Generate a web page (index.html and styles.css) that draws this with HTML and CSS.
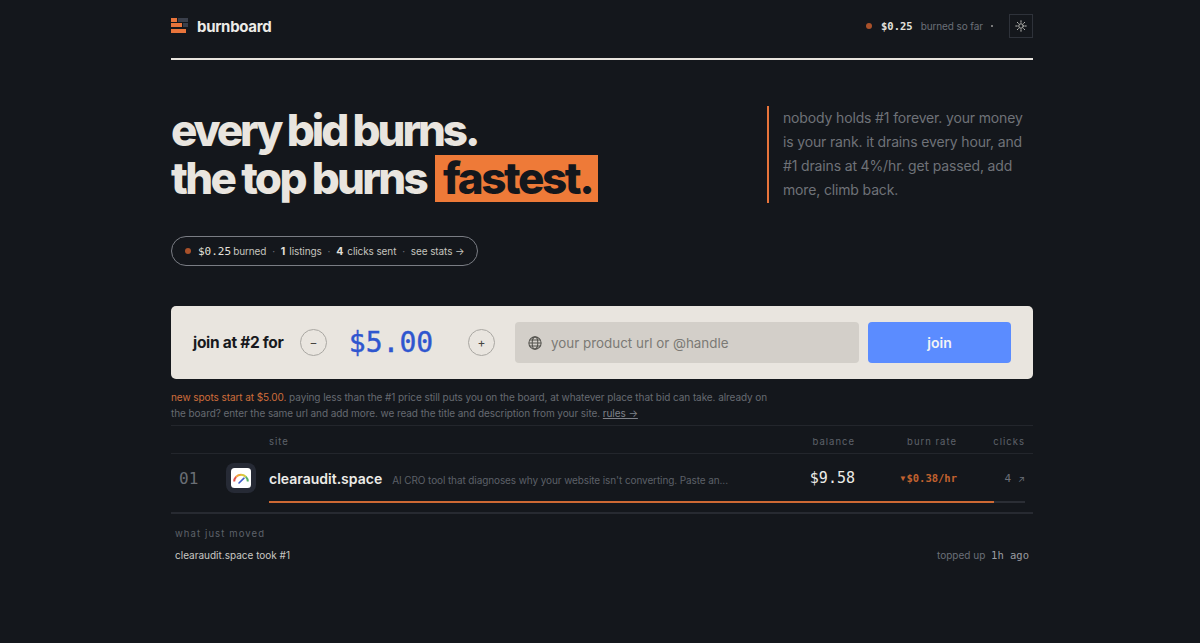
FILE: index.html
```html
<!DOCTYPE html>
<html lang="en">
<head>
    <meta charset="UTF-8">
    <meta name="viewport" content="width=device-width, initial-scale=1.0">
    <title>burnboard</title>
    <link rel="stylesheet" href="styles.css">
</head>
<body>
    <div class="container">
        <header class="topbar">
            <div class="brand">
                <svg class="brand-icon" width="17" height="16" viewBox="0 0 17 16">
                    <rect x="0" y="0" width="6" height="4" fill="#e8743b"/>
                    <rect x="7" y="0" width="10" height="4" fill="#3a3f4b"/>
                    <rect x="0" y="5" width="11" height="4" fill="#e8743b"/>
                    <rect x="12" y="5" width="5" height="4" fill="#3a3f4b"/>
                    <rect x="0" y="11" width="15" height="4" fill="#e8743b"/>
                </svg>
                <span class="brand-name">burnboard</span>
            </div>
            <div class="top-stats">
                <span class="dot"></span>
                <span class="mono top-amount">$0.25</span>
                <span class="top-label">burned so far</span>
                <span class="tiny-dot"></span>
                <button class="theme-btn" aria-label="theme">
                    <svg width="12" height="12" viewBox="0 0 24 24" fill="none" stroke="#b9b9b4" stroke-width="2" stroke-linecap="round">
                        <circle cx="12" cy="12" r="4.5"/>
                        <path d="M12 1.5v3M12 19.5v3M1.5 12h3M19.5 12h3M4.6 4.6l2.1 2.1M17.3 17.3l2.1 2.1M4.6 19.4l2.1-2.1M17.3 6.7l2.1-2.1"/>
                    </svg>
                </button>
            </div>
        </header>

        <section class="hero">
            <h1><span class="tight">every bid burns.</span><br>the top burns <span class="hl">fastest.</span></h1>
            <p class="hero-note">nobody holds #1 forever. your money is your rank. it drains every hour, and #1 drains at 4%/hr. get passed, add more, climb back.</p>
        </section>

        <div class="pill">
            <span class="dot"></span>
            <span class="mono pill-amount">$0.25</span>
            <span class="pill-text">burned</span>
            <span class="sep">·</span>
            <strong>1</strong>
            <span class="pill-text">listings</span>
            <span class="sep">·</span>
            <strong>4</strong>
            <span class="pill-text">clicks sent</span>
            <span class="sep">·</span>
            <span class="pill-text">see stats →</span>
        </div>

        <form class="join">
            <span class="join-label">join at #2 for</span>
            <button type="button" class="round-btn">−</button>
            <span class="mono price">$5.00</span>
            <button type="button" class="round-btn">+</button>
            <div class="url-field">
                <svg width="14" height="14" viewBox="0 0 24 24" fill="none" stroke="#55544f" stroke-width="1.8">
                    <circle cx="12" cy="12" r="10.5"/>
                    <ellipse cx="12" cy="12" rx="4.8" ry="10.5"/>
                    <path d="M1.5 12h21M3 6.8h18M3 17.2h18"/>
                </svg>
                <span>your product url or @handle</span>
            </div>
            <button type="button" class="join-btn">join</button>
        </form>

        <p class="fine"><span class="accent">new spots start at $5.00.</span> paying less than the #1 price still puts you on the board, at whatever place that bid can take. already on the board? enter the same url and add more. we read the title and description from your site. <a href="#">rules →</a></p>

        <div class="board">
            <div class="row head">
                <span></span>
                <span></span>
                <span class="col-site">site</span>
                <span class="num">balance</span>
                <span class="num">burn rate</span>
                <span class="num">clicks</span>
            </div>
            <div class="listing">
                <div class="row item">
                    <span class="mono rank">01</span>
                    <span class="favicon">
                        <svg width="20" height="20" viewBox="0 0 20 20" fill="none" stroke-width="2">
                            <rect width="20" height="20" rx="3.5" fill="#fff"/>
                            <path d="M3.2 13.5a6.8 6.8 0 0 1 2-4.8" stroke="#e2574c"/>
                            <path d="M5.2 8.7a6.8 6.8 0 0 1 4.8-2" stroke="#f0a63c"/>
                            <path d="M10 6.7a6.8 6.8 0 0 1 4.8 2" stroke="#d9c93f"/>
                            <path d="M14.8 8.7a6.8 6.8 0 0 1 2 4.8" stroke="#58b368"/>
                            <path d="M8 15l5-4.8" stroke="#3f5bc9" stroke-width="1.6" stroke-linecap="round"/>
                        </svg>
                    </span>
                    <span class="site"><b>clearaudit.space</b><em>AI CRO tool that diagnoses why your website isn't converting. Paste an...</em></span>
                    <span class="mono num balance">$9.58</span>
                    <span class="mono num rate"><i>▾</i>$0.38/hr</span>
                    <span class="num clicks"><span class="mono">4</span><small>↗</small></span>
                </div>
                <div class="bar"><div class="bar-fill" style="width: 95.9%"></div></div>
            </div>
        </div>

        <section class="moves">
            <div class="moves-title">what just moved</div>
            <div class="move">
                <span>clearaudit.space took #1</span>
                <span class="move-when">topped up <span class="mono">1h ago</span></span>
            </div>
        </section>
    </div>
</body>
</html>
```

FILE: styles.css
```css
* {
    margin: 0;
    padding: 0;
    box-sizing: border-box;
}

body {
    font-family: 'Inter', sans-serif;
    background: #14171c;
    color: #e8e4de;
    height: 643px;
    overflow: hidden;
}

.container {
    width: 862px;
    margin-left: 171px;
}

.mono {
    font-family: 'DejaVu Sans Mono', monospace;
}

.dot {
    width: 6px;
    height: 6px;
    border-radius: 50%;
    background: #a9512a;
    flex: none;
}

/* Top bar */
.topbar {
    height: 60px;
    border-bottom: 2px solid #e8e4de;
    display: flex;
    align-items: center;
    justify-content: space-between;
    padding-bottom: 6px;
}

.brand {
    display: flex;
    align-items: center;
    gap: 9px;
}

.brand-name {
    font-size: 15px;
    font-weight: 700;
    letter-spacing: -0.3px;
    color: #ecebe7;
}

.top-stats {
    display: flex;
    align-items: center;
    font-size: 10px;
}

.top-amount {
    margin-left: 9px;
    font-size: 10.5px;
    font-weight: 700;
    color: #e3e1dc;
}

.top-label {
    margin-left: 8px;
    letter-spacing: -0.1px;
    color: #6b6f78;
}

.tiny-dot {
    width: 2px;
    height: 2px;
    margin: 0 16px 0 8px;
    background: #9a9a98;
    border-radius: 50%;
}

.theme-btn {
    width: 24px;
    height: 24px;
    background: transparent;
    border: 1px solid #2e323a;
    display: flex;
    align-items: center;
    justify-content: center;
}

/* Hero */
.hero {
    display: flex;
    justify-content: space-between;
    padding-top: 46px;
}

h1 {
    font-size: 44px;
    line-height: 48px;
    font-weight: 800;
    letter-spacing: -2.7px;
    color: #e9e5df;
}

.tight {
    letter-spacing: -3.1px;
}

.hl {
    display: inline-block;
    background: #ee7a38;
    color: #14171c;
    padding: 0 6px 0 8px;
    margin-left: 2px;
    height: 47px;
    line-height: 47px;
    letter-spacing: -2.4px;
}

.hero-note {
    width: 266px;
    height: 97px;
    border-left: 2px solid #e8743b;
    padding-left: 14px;
    font-size: 14px;
    line-height: 24px;
    letter-spacing: -0.15px;
    color: #6f7278;
}

/* Stats pill */
.pill {
    display: inline-flex;
    align-items: center;
    height: 30px;
    margin-top: 33px;
    padding: 0 12px 0 13px;
    border: 1px solid #7a7d84;
    border-radius: 15px;
    font-size: 10px;
    color: #c5c4bf;
}

.pill-text {
    letter-spacing: -0.1px;
}

.pill-amount {
    margin-left: 7px;
    margin-right: 2px;
    font-size: 11px;
    color: #e2e0db;
}

.pill strong {
    margin-right: 4px;
    font-size: 10.5px;
    font-weight: 700;
    color: #e2e0db;
}

.sep {
    margin: 0 5.8px;
    color: #6b6f78;
}

/* Join form */
.join {
    display: flex;
    align-items: center;
    height: 73px;
    margin-top: 40px;
    padding: 0 22px;
    background: #e9e5df;
    border-radius: 5px;
}

.join-label {
    width: 92px;
    font-size: 15.5px;
    font-weight: 700;
    letter-spacing: -0.3px;
    color: #17191d;
    white-space: nowrap;
}

.round-btn {
    width: 27px;
    height: 27px;
    flex: none;
    background: transparent;
    border: 1px solid #a9a7a2;
    border-radius: 50%;
    color: #45443f;
    font-family: 'Inter', sans-serif;
    font-size: 12px;
}

.join-label + .round-btn {
    margin-left: 15px;
}

.price {
    width: 141px;
    padding-right: 13px;
    text-align: center;
    font-size: 28px;
    color: #2f56cf;
    -webkit-text-stroke: 0.4px #2f56cf;
}

.url-field {
    display: flex;
    align-items: center;
    gap: 9px;
    width: 344px;
    height: 41px;
    margin-left: 20px;
    padding-left: 13px;
    background: #d3cfc9;
    border-radius: 4px;
    font-size: 13.4px;
    color: #7b7a75;
}

.join-btn {
    width: 143px;
    height: 41px;
    margin-left: 9px;
    background: #5b8cff;
    border: none;
    border-radius: 4px;
    color: #f2f3f5;
    font-family: 'Inter', sans-serif;
    font-size: 14px;
    font-weight: 600;
}

/* Fine print */
.fine {
    width: 600px;
    margin-top: 10px;
    font-size: 10px;
    line-height: 16px;
    letter-spacing: -0.075px;
    color: #666a71;
}

.accent {
    color: #cf6d3b;
}

.fine a {
    color: #7f8289;
}

/* Leaderboard */
.board {
    margin-top: 4px;
    border-top: 1px solid #23262c;
}

.row {
    display: grid;
    grid-template-columns: 55px 43px 1fr 90px 102px 68px;
    align-items: center;
    padding-right: 8px;
}

.head {
    height: 28px;
    padding-top: 3px;
    border-bottom: 1px solid #23262c;
    font-size: 9.5px;
    letter-spacing: 1px;
    color: #5e626a;
}

.num {
    text-align: right;
}

.listing {
    height: 60px;
    border-bottom: 2px solid #272a31;
}

.item {
    height: 47px;
    padding-top: 1px;
}

.rank {
    padding-left: 8px;
    font-size: 16px;
    color: #6a6e75;
}

.favicon {
    width: 30px;
    height: 30px;
    border-radius: 8px;
    background: #262a35;
    display: flex;
    align-items: center;
    justify-content: center;
}

.site {
    white-space: nowrap;
    overflow: hidden;
}

.site b {
    font-size: 14px;
    font-weight: 600;
    color: #ecebe7;
}

.site em {
    margin-left: 10px;
    font-style: normal;
    font-size: 10px;
    letter-spacing: -0.1px;
    color: #5c6068;
}

.balance {
    font-size: 15px;
    color: #ecebe7;
}

.rate {
    font-size: 10.5px;
    font-weight: 700;
    color: #c2622f;
}

.rate i {
    font-style: normal;
    font-size: 12px;
}

.clicks {
    font-size: 11px;
    color: #6b6f78;
}

.clicks small {
    margin-left: 7px;
    font-size: 9px;
}

.bar {
    height: 2px;
    margin: 0 8px 0 98px;
    background: #2b2e35;
}

.bar-fill {
    height: 100%;
    background: #cd6934;
}

/* Recent moves */
.moves {
    padding: 14px 4px 0;
}

.moves-title {
    font-size: 9.5px;
    letter-spacing: 1.1px;
    color: #5e626a;
}

.move {
    display: flex;
    justify-content: space-between;
    align-items: center;
    margin-top: 10px;
    font-size: 10px;
    color: #c9c8c3;
}

.move-when {
    color: #6b6f78;
}

.move-when .mono {
    margin-left: 3px;
    font-size: 10.5px;
    color: #9a9ca2;
}
```
